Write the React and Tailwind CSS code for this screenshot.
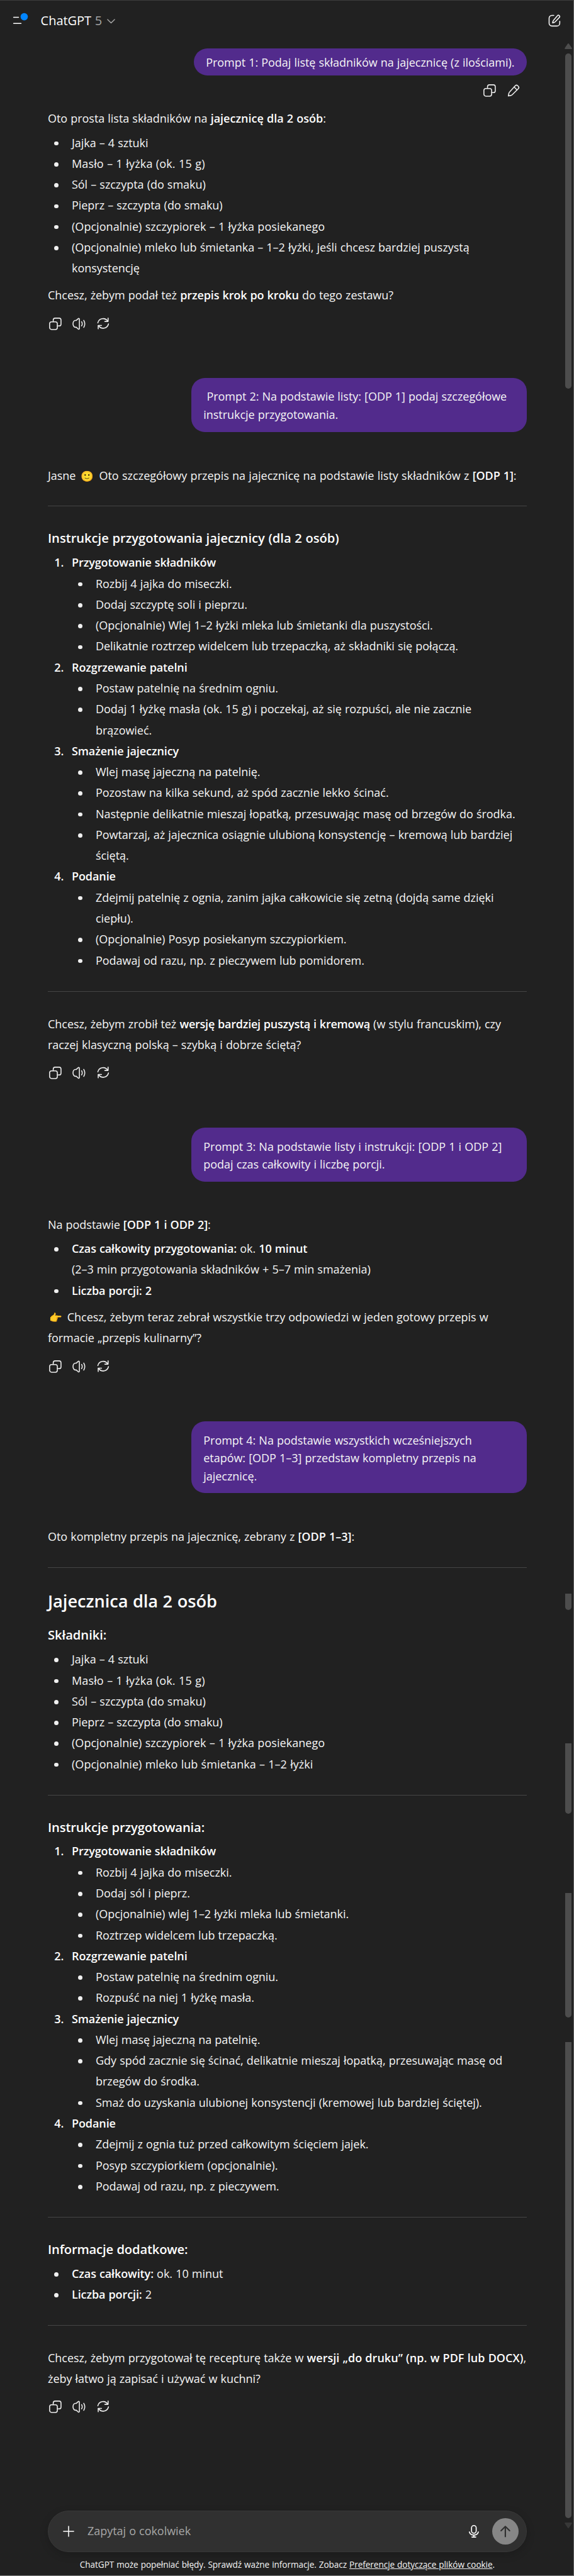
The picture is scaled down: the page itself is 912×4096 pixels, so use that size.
import React from "react";

function Icon({ className = "h-[23.8px] w-[23.8px]", children, stroke = 1.33 }) {
  return (
    <svg
      viewBox="0 0 20 20"
      className={`shrink-0 ${className}`}
      fill="none"
      stroke="currentColor"
      strokeWidth={stroke}
      strokeLinecap="round"
      strokeLinejoin="round"
    >
      {children}
    </svg>
  );
}

const CopyIcon = () => (
  <Icon>
    <rect x="2.4" y="7.3" width="10.3" height="10.3" rx="2.6" />
    <path d="M7.2 7.2V5a2.6 2.6 0 0 1 2.6-2.6H15A2.6 2.6 0 0 1 17.6 5v5.2a2.6 2.6 0 0 1-2.6 2.6h-2.2" />
  </Icon>
);

const SpeakerIcon = () => (
  <Icon>
    <path d="M10.2 3.7v12.6a.9.9 0 0 1-1.5.7L6.1 14.6H4.9c-1.8 0-3.2-2.1-3.2-4.6s1.4-4.6 3.2-4.6h1.2L8.7 3a.9.9 0 0 1 1.5.7z" />
    <path d="M13.1 7.2c.6.8.9 1.8.9 2.8s-.3 2-.9 2.8" />
    <path d="M16 5.3c.9 1.4 1.4 3 1.4 4.700s-.5 3.300-1.400 4.700" />
  </Icon>
);

const RefreshIcon = () => (
  <Icon>
    <path d="M16.6 2.3v4.5h-4.4" />
    <path d="M2.9 8.7a7.2 7.2 0 0 1 13.2-2.1" />
    <path d="M3.4 16.7v-4.5h4.4" />
    <path d="M17.1 10.1a7.2 7.2 0 0 1-13.2 2.3" />
  </Icon>
);

const PencilIcon = () => (
  <Icon>
    <path d="M12.4 3.6a2.3 2.3 0 0 1 3.2 0l.8.8a2.3 2.3 0 0 1 0 3.2l-8 8c-.6.6-1.3 1-2.1 1.1l-3.2.6.6-3.2c.1-.8.5-1.5 1.1-2.1z" />
    <path d="M10.8 5.3l3.9 3.9" />
  </Icon>
);

const EditIcon = () => (
  <Icon>
    <path d="M9.2 2.9H6.6A3.7 3.7 0 0 0 2.9 6.6v6.8a3.7 3.7 0 0 0 3.7 3.7h6.8a3.7 3.7 0 0 0 3.7-3.7v-2.6" />
    <path d="M14 3.3a1.7 1.7 0 0 1 2.6 2.3l-5.4 5.8c-.9.9-2.4 1.4-3.6 1.5.1-1.3.6-2.7 1.4-3.7z" />
  </Icon>
);

function Actions({ className }) {
  return (
    <div className={`-ml-[7.2px] flex h-[38px] text-[#ececec] ${className}`}>
      {[CopyIcon, SpeakerIcon, RefreshIcon].map((I, i) => (
        <button key={i} className="flex h-[38px] w-[38.04px] items-center justify-center">
          <I />
        </button>
      ))}
    </div>
  );
}

function Bubble({ className, children }) {
  return (
    <div className={`ml-auto w-[532.6px] shrink-0 rounded-[21.4px] bg-[#522b8c] px-[19px] pt-[15.2px] pb-[13.3px] leading-[28.53px] ${className}`}>
      {children}
    </div>
  );
}

const P = ({ className, children }) => <p className={`shrink-0 leading-[33.285px] ${className}`}>{children}</p>;
const B = ({ className = "tracking-[-0.1px]", children }) => (
  <strong className={`font-semibold text-white ${className}`}>{children}</strong>
);
const Hr = ({ className }) => <div className={`h-px shrink-0 bg-[#454545] ${className}`} />;
const H3 = ({ className, children }) => (
  <h3 className={`shrink-0 text-[20.2px] leading-[30px] font-semibold text-white ${className}`}>{children}</h3>
);

function Bullets({ className = "", items }) {
  return (
    <ul className={`leading-[33.285px] ${className}`}>
      {items.map((t, i) => (
        <li key={i} className="flex">
          <span className="flex h-[33.285px] w-[38px] shrink-0 items-center pt-[1.6px] pl-[10px]">
            <span className="h-[6.6px] w-[6.6px] rounded-full bg-[#f0f0f0]" />
          </span>
          <span>{t}</span>
        </li>
      ))}
    </ul>
  );
}

function Steps({ className, steps }) {
  return (
    <ol className={`leading-[33.285px] ${className}`}>
      {steps.map((s, i) => (
        <li key={i} className="flex">
          <span className="w-[38px] shrink-0 pr-[12.5px] text-right font-semibold text-white">{i + 1}.</span>
          <div>
            <B>{s.title}</B>
            <Bullets items={s.items} />
          </div>
        </li>
      ))}
    </ol>
  );
}

const steps1 = [
  {
    title: "Przygotowanie składników",
    items: [
      "Rozbij 4 jajka do miseczki.",
      "Dodaj szczyptę soli i pieprzu.",
      "(Opcjonalnie) Wlej 1–2 łyżki mleka lub śmietanki dla puszystości.",
      "Delikatnie roztrzep widelcem lub trzepaczką, aż składniki się połączą.",
    ],
  },
  {
    title: "Rozgrzewanie patelni",
    items: [
      "Postaw patelnię na średnim ogniu.",
      <>Dodaj 1 łyżkę masła (ok. 15 g) i poczekaj, aż się rozpuści, ale nie zacznie<br />brązowieć.</>,
    ],
  },
  {
    title: "Smażenie jajecznicy",
    items: [
      "Wlej masę jajeczną na patelnię.",
      "Pozostaw na kilka sekund, aż spód zacznie lekko ścinać.",
      "Następnie delikatnie mieszaj łopatką, przesuwając masę od brzegów do środka.",
      <>Powtarzaj, aż jajecznica osiągnie ulubioną konsystencję – kremową lub bardziej<br />ściętą.</>,
    ],
  },
  {
    title: "Podanie",
    items: [
      <>Zdejmij patelnię z ognia, zanim jajka całkowicie się zetną (dojdą same dzięki<br />ciepłu).</>,
      "(Opcjonalnie) Posyp posiekanym szczypiorkiem.",
      "Podawaj od razu, np. z pieczywem lub pomidorem.",
    ],
  },
];

const steps2 = [
  {
    title: "Przygotowanie składników",
    items: [
      "Rozbij 4 jajka do miseczki.",
      "Dodaj sól i pieprz.",
      "(Opcjonalnie) wlej 1–2 łyżki mleka lub śmietanki.",
      "Roztrzep widelcem lub trzepaczką.",
    ],
  },
  {
    title: "Rozgrzewanie patelni",
    items: ["Postaw patelnię na średnim ogniu.", "Rozpuść na niej 1 łyżkę masła."],
  },
  {
    title: "Smażenie jajecznicy",
    items: [
      "Wlej masę jajeczną na patelnię.",
      <>Gdy spód zacznie się ścinać, delikatnie mieszaj łopatką, przesuwając masę od<br />brzegów do środka.</>,
      "Smaż do uzyskania ulubionej konsystencji (kremowej lub bardziej ściętej).",
    ],
  },
  {
    title: "Podanie",
    items: [
      "Zdejmij z ognia tuż przed całkowitym ścięciem jajek.",
      "Posyp szczypiorkiem (opcjonalnie).",
      "Podawaj od razu, np. z pieczywem.",
    ],
  },
];

const ingredients = [
  "Jajka – 4 sztuki",
  <span className="tracking-[0.14px]">Masło – 1 łyżka (ok. 15 g)</span>,
  "Sól – szczypta (do smaku)",
  "Pieprz – szczypta (do smaku)",
  <span className="tracking-[0.04px]">(Opcjonalnie) szczypiorek – 1 łyżka posiekanego</span>,
];

function Scrollbar() {
  return (
    <aside className="flex w-[14px] shrink-0 flex-col items-center text-[#4d4d4d]">
      <svg viewBox="0 0 12 9" className="mt-[4.5px] h-[9px] w-[12px]" fill="currentColor">
        <path d="M4.9.8a1.4 1.4 0 0 1 2.2 0l4.4 6.4Q12.4 9 10.6 9H1.4Q-.4 9 .5 7.2z" />
      </svg>
      <div className="mt-[7px] h-[533.5px] w-[10.5px] rounded-full bg-[#4d4d4d]" />
      <div className="mt-[1915.5px] h-[26.5px] w-[10.5px] rounded-b-full bg-[#4d4d4d]" />
      <div className="mt-[211.5px] h-[112px] w-[10.5px] rounded-b-full bg-[#4d4d4d]" />
      <div className="mt-[126px] h-[198px] w-[10.5px] rounded-b-full bg-[#4d4d4d]" />
      <div className="mt-[39.5px] h-[757px] w-[10.5px] rounded-b-full bg-[#4d4d4d]" />
      <svg viewBox="0 0 12 9" className="mt-[7px] h-[9px] w-[12px]" fill="#373737">
        <path d="M4.9 8.2a1.4 1.4 0 0 0 2.2 0l4.4-6.4Q12.4 0 10.6 0H1.4Q-.4 0 .5 1.8z" />
      </svg>
    </aside>
  );
}

export default function App() {
  return (
    <div className="flex h-[4096px] w-[912px] flex-col overflow-hidden border-t border-r border-b border-t-[#3d3d3d] border-r-[#5e5e5e] border-b-[#7d7d7d] bg-[#212121] font-['Open_Sans','Noto_Sans',sans-serif] text-[18px] tracking-[-0.04px] [word-spacing:0.5px] whitespace-nowrap text-[#f5f5f5]">
      <header className="flex h-[63px] shrink-0 items-center pl-[19px]">
        <svg viewBox="20 20 28 28" className="h-[26.6px] w-[26.6px]" fill="none" stroke="#fff" strokeWidth="1.7" strokeLinecap="round">
          <path d="M22.8 29H31M22.8 39.2h12.4" />
          <circle cx="40.5" cy="28" r="6.1" fill="#0285ff" stroke="none" />
        </svg>
        <span className="ml-[19px] text-[20px] leading-[28px] text-white">
          ChatGPT <span className="text-[#a3a3a3]">5</span>
        </span>
        <svg viewBox="0 0 14 8" className="mt-[3px] ml-[8px] h-[7.4px] w-[13px]" fill="none" stroke="#a3a3a3" strokeWidth="1.6" strokeLinecap="round" strokeLinejoin="round">
          <path d="M1 1l6 6 6-6" />
        </svg>
        <button className="mr-[17.8px] ml-auto text-[#f3f3f3]">
          <EditIcon />
        </button>
      </header>

      <div className="flex min-h-0 flex-1">
        <main className="ml-[76px] flex w-[760.9px] shrink-0 flex-col">
          <div className="mt-[13px] ml-auto h-[42.8px] shrink-0 rounded-[21.4px] bg-[#522b8c] px-[19.5px] pt-[8.2px] leading-[28.53px]">
            Prompt 1: Podaj listę składników na jajecznicę (z ilościami).
          </div>
          <div className="mt-[5.1px] flex h-[38px] shrink-0 justify-end text-[#ececec]">
            <button className="flex w-[38px] items-center justify-center"><CopyIcon /></button>
            <button className="mr-[1.5px] flex w-[38px] items-center justify-center"><PencilIcon /></button>
          </div>

          <P className="mt-[9.4px]">Oto prosta lista składników na <B className="tracking-[0px]">jajecznicę dla 2 osób</B>:</P>
          <Bullets
            className="mt-[5px]"
            items={[
              ...ingredients,
              <>(Opcjonalnie) mleko lub śmietanka – 1–2 łyżki, jeśli chcesz bardziej puszystą<br />konsystencję</>,
            ]}
          />
          <P className="mt-[9.4px]">Chcesz, żebym podał też <B>przepis krok po kroku</B> do tego zestawu?</P>
          <Actions className="mt-[9.5px]" />

          <Bubble className="mt-[67.4px] h-[85.6px]">
            &nbsp;Prompt 2: Na podstawie listy: [ODP 1] podaj szczegółowe<br />instrukcje przygotowania.
          </Bubble>

          <P className="mt-[52.9px] flex">
            <span className="w-[52px]">Jasne</span>
            <span className="w-[29.4px] text-[16.6px]">🙂</span>
            <span className="tracking-[0.03px]">
              Oto szczegółowy przepis na jajecznicę na podstawie listy składników z <B>[ODP 1]</B>:
            </span>
          </P>
          <Hr className="mt-[31.5px]" />
          <H3 className="mt-[35px]">Instrukcje przygotowania jajecznicy (dla 2 osób)</H3>
          <Steps className="mt-[7.9px]" steps={steps1} />
          <Hr className="mt-[31.8px]" />
          <P className="mt-[34.9px]">
            Chcesz, żebym zrobił też <B className="tracking-[-0.22px]">wersję bardziej puszystą i kremową</B> (w stylu francuskim), czy<br />raczej klasyczną polską – szybką i dobrze ściętą?
          </P>
          <Actions className="mt-[9px]" />

          <Bubble className="mt-[68.3px] h-[85.6px]">
            Prompt 3: Na podstawie listy i instrukcji: [ODP 1 i ODP 2]<br />podaj czas całkowity i liczbę porcji.
          </Bubble>

          <P className="mt-[51.9px]">Na podstawie <B className="tracking-[-0.05px]">[ODP 1 i ODP 2]</B>:</P>
          <Bullets
            className="mt-[4.8px]"
            items={[
              <><B>Czas całkowity przygotowania:</B> ok. <B>10 minut</B><br />(2–3 min przygotowania składników + 5–7 min smażenia)</>,
              <B>Liczba porcji: 2</B>,
            ]}
          />
          <P className="mt-[9.2px]">
            <span className="flex">
              <span className="w-[30.8px] pl-[2px] text-[16.6px]">👉</span>
              <span>Chcesz, żebym teraz zebrał wszystkie trzy odpowiedzi w jeden gotowy przepis w</span>
            </span>
            formacie „przepis kulinarny”?
          </P>
          <Actions className="mt-[9.4px]" />

          <Bubble className="mt-[68.4px] h-[114.1px]">
            Prompt 4: Na podstawie wszystkich wcześniejszych<br />etapów: [ODP 1–3] przedstaw kompletny przepis na<br />jajecznicę.
          </Bubble>

          <P className="mt-[52.4px]">Oto kompletny przepis na jajecznicę, zebrany z <B className="tracking-[0px]">[ODP 1–3]</B>:</P>
          <Hr className="mt-[32px]" />
          <h2 className="mt-[34.8px] shrink-0 text-[27.2px] leading-[36px] font-semibold text-white">Jajecznica dla 2 osób</h2>
          <H3 className="mt-[20.3px]">Składniki:</H3>
          <Bullets className="mt-[8px]" items={[...ingredients, <span className="tracking-[0.04px]">(Opcjonalnie) mleko lub śmietanka – 1–2 łyżki</span>]} />
          <Hr className="mt-[31.7px]" />
          <H3 className="mt-[35.4px] tracking-[-0.13px]">Instrukcje przygotowania:</H3>
          <Steps className="mt-[7.4px]" steps={steps2} />
          <Hr className="mt-[31.8px]" />
          <H3 className="mt-[35.3px] tracking-[-0.17px]">Informacje dodatkowe:</H3>
          <Bullets
            className="mt-[7.6px]"
            items={[<><B>Czas całkowity:</B> ok. 10 minut</>, <><B>Liczba porcji:</B> 2</>]}
          />
          <Hr className="mt-[31.4px]" />
          <P className="mt-[35.2px]">
            Chcesz, żebym przygotował tę recepturę także w <B className="tracking-[0.03px]">wersji „do druku” (np. w PDF lub DOCX)</B>,<br />żeby łatwo ją zapisać i używać w kuchni?
          </P>
          <Actions className="mt-[8.8px]" />

          <div className="mt-[145.4px] flex h-[66.4px] shrink-0 items-center rounded-full border border-[#383838] bg-[#303030] pr-[11.5px] pl-[23px] shadow-[0_4px_14px_rgba(0,0,0,0.18)]">
            <Icon className="h-[18px] w-[18px] text-white" stroke={1.7}>
              <path d="M10 1v18M1 10h18" />
            </Icon>
            <span className="mt-[-1px] ml-[21px] text-[#a6a6a6]">Zapytaj o cokolwiek</span>
            <Icon className="mr-[16.5px] ml-auto h-[23.8px] w-[23.8px] text-white" stroke={1.4}>
              <rect x="6.9" y="2.3" width="6.2" height="10.2" rx="3.1" />
              <path d="M4 10.9c.7 2.6 3.1 4.1 6 4.1s5.3-1.5 6-4.1M10 15v2.6M7.4 17.7h5.2" />
            </Icon>
            <button className="flex h-[42.8px] w-[42.8px] items-center justify-center rounded-full bg-[#868686] text-[#303030]">
              <Icon stroke={1.8}>
                <path d="M10 17.1V3.6M4.3 9.2L10 3.5l5.7 5.7" />
              </Icon>
            </button>
          </div>
          <div className="mt-[9.6px] shrink-0 text-center text-[13.56px] leading-[20px]">
            ChatGPT może popełniać błędy. Sprawdź ważne informacje. Zobacz <span className="underline">Preferencje dotyczące plików cookie</span>.
          </div>
        </main>
        <div className="flex-1" />
        <Scrollbar />
        <div className="w-[1px]" />
      </div>
    </div>
  );
}
